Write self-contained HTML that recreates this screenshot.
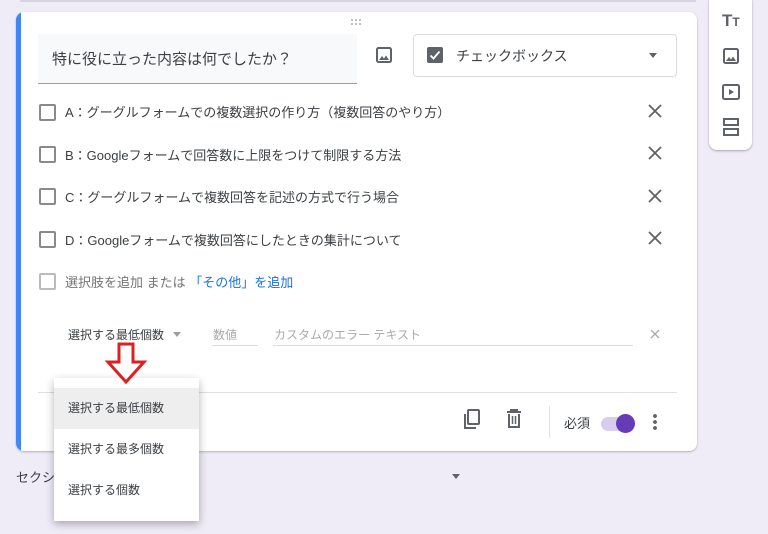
<!DOCTYPE html>
<html><head><meta charset="utf-8"><style>
*{margin:0;padding:0;box-sizing:border-box}
body{width:768px;height:534px;background:#efebf7;position:relative;overflow:hidden;font-family:"Liberation Sans","Noto Sans CJK JP",sans-serif;color:#202124}
.a{position:absolute}
.card{left:16px;top:12px;width:681px;height:439px;background:#fff;border-radius:8px;box-shadow:0 1px 2px rgba(0,0,0,.25);overflow:hidden}
.bar{left:0;top:0;width:5px;height:439px;background:#4285f4}
.cb{width:17px;height:17px;border:2px solid #8a8a8a;border-radius:2px}
.opt{font-size:13px;color:#3c4043}
.menu div{height:41px;line-height:41px;padding-left:14px;font-size:12px;color:#3c4043}
</style></head><body>
<div class="a" style="left:20px;top:0;width:676px;height:2px;background:#d8d4e0"></div>
<div class="a card">
 <div class="a bar"></div>
 <svg class="a" style="left:334px;top:6px" width="14" height="9"><g fill="#aaa"><circle cx="2" cy="2" r="1"/><circle cx="6" cy="2" r="1"/><circle cx="10" cy="2" r="1"/><circle cx="2" cy="6" r="1"/><circle cx="6" cy="6" r="1"/><circle cx="10" cy="6" r="1"/></g></svg>
 <div class="a" style="left:22px;top:22px;width:319px;height:50px;background:#f8f9fa;border-bottom:1px solid #9e9e9e"></div>
 <div class="a" style="left:36px;top:36px;font-size:15px;color:#3c4043">特に役に立った内容は何でしたか？</div>
 <svg class="a" style="left:359px;top:34px" width="18" height="18" viewBox="0 0 18 18"><rect x="2" y="2" width="14" height="14" rx="1.5" fill="none" stroke="#5f6368" stroke-width="2"/><path d="M4 14l3-4 2 2.5 2-3 3 4.5z" fill="#5f6368"/></svg>
 <div class="a" style="left:397px;top:22px;width:264px;height:43px;border:1px solid #dadce0;border-radius:4px"></div>
 <svg class="a" style="left:411px;top:35px" width="16" height="16" viewBox="0 0 16 16"><rect width="16" height="16" rx="2" fill="#5f6368"/><path d="M3.5 8.5l3 3 6-7" fill="none" stroke="#fff" stroke-width="1.8"/></svg>
 <div class="a" style="left:440px;top:34px;font-size:14px;color:#3c4043">チェックボックス</div>
 <div class="a" style="left:633px;top:41px;border:4px solid transparent;border-top:5px solid #5f6368"></div>
 <div class="a cb" style="left:23px;top:92px"></div><div class="a opt" style="left:49px;top:90px">A：グーグルフォームでの複数選択の作り方（複数回答のやり方）</div>
 <div class="a cb" style="left:23px;top:134px"></div><div class="a opt" style="left:49px;top:133px">B：Googleフォームで回答数に上限をつけて制限する方法</div>
 <div class="a cb" style="left:23px;top:176px"></div><div class="a opt" style="left:49px;top:175px">C：グーグルフォームで複数回答を記述の方式で行う場合</div>
 <div class="a cb" style="left:23px;top:219px"></div><div class="a opt" style="left:49px;top:218px">D：Googleフォームで複数回答にしたときの集計について</div>
 <svg class="a" style="left:632px;top:92px" width="14" height="150" viewBox="0 0 14 150"><g stroke="#5f6368" stroke-width="1.8"><path d="M1 1l12 12M13 1L1 13"/><path d="M1 43l12 12M13 43L1 55"/><path d="M1 86l12 12M13 86L1 98"/><path d="M1 128l12 12M13 128L1 140"/></g></svg>
 <div class="a cb" style="left:23px;top:261px;border-color:#bbb"></div><div class="a opt" style="left:49px;top:260px;color:#757575">選択肢を追加 または <span style="color:#1a73e8">「その他」を追加</span></div>
 <div class="a" style="left:52px;top:314px;font-size:12px;color:#3c4043">選択する最低個数</div>
 <div class="a" style="left:157px;top:320px;border:4px solid transparent;border-top:5px solid #9e9e9e"></div>
 <div class="a" style="left:197px;top:314px;font-size:12px;color:#aaa">数値</div>
 <div class="a" style="left:196px;top:333px;width:46px;height:1px;background:#ddd"></div>
 <div class="a" style="left:258px;top:314px;font-size:12px;color:#aaa">カスタムのエラー テキスト</div>
 <div class="a" style="left:257px;top:333px;width:360px;height:1px;background:#ddd"></div>
 <svg class="a" style="left:634px;top:317px" width="10" height="10"><path d="M1 1l8 8M9 1L1 9" stroke="#aaa" stroke-width="1.3"/></svg>
 <div class="a" style="left:22px;top:380px;width:639px;height:1px;background:#e0e0e0"></div>
 <svg class="a" style="left:446px;top:396px" width="20" height="22" viewBox="0 0 20 22"><rect x="6" y="2" width="11" height="14" rx="1" fill="none" stroke="#5f6368" stroke-width="2"/><path d="M3 6v14h11" fill="none" stroke="#5f6368" stroke-width="2"/></svg>
 <svg class="a" style="left:490px;top:397px" width="16" height="20" viewBox="0 0 16 20"><path d="M1 3h14M5 3V1h6v2M3 5v13h10V5" fill="none" stroke="#5f6368" stroke-width="2"/><path d="M6.5 7v8M9.5 7v8" stroke="#5f6368" stroke-width="1.5"/></svg>
 <div class="a" style="left:533px;top:394px;width:1px;height:32px;background:#e0e0e0"></div>
 <div class="a" style="left:548px;top:401px;font-size:13px;color:#3c4043">必須</div>
 <div class="a" style="left:585px;top:405px;width:30px;height:14px;border-radius:7px;background:#d8cdef"></div>
 <div class="a" style="left:600px;top:402px;width:19px;height:19px;border-radius:50%;background:#673ab7"></div>
 <div class="a" style="left:637px;top:401px;width:4px;height:18px;background:radial-gradient(circle,#5f6368 1.8px,transparent 2px) 0 0/4px 6px"></div>
</div>
<div class="a" style="left:16px;top:467px;font-size:13px;color:#3c4043">セクション 最後に送信</div>
<div class="a" style="left:452px;top:474px;border:4px solid transparent;border-top:5px solid #5f6368"></div>
<div class="a" style="left:709px;top:-6px;width:43px;height:156px;background:#fff;border-radius:8px;box-shadow:0 1px 2px rgba(0,0,0,.3)"></div>
<div class="a" style="left:722px;top:11px;font-size:17px;font-weight:bold;color:#5f6368">T<span style="font-size:12px">T</span></div>
<svg class="a" style="left:722px;top:47px" width="18" height="18" viewBox="0 0 18 18"><rect x="2" y="2" width="14" height="14" rx="1.5" fill="none" stroke="#5f6368" stroke-width="2"/><path d="M4 14l3-4 2 2.5 2-3 3 4.5z" fill="#5f6368"/></svg>
<svg class="a" style="left:721px;top:83px" width="20" height="18" viewBox="0 0 20 18"><rect x="2" y="2" width="16" height="14" rx="1.5" fill="none" stroke="#5f6368" stroke-width="2"/><path d="M8 6v6l5-3z" fill="#5f6368"/></svg>
<svg class="a" style="left:722px;top:118px" width="18" height="18" viewBox="0 0 18 18"><rect x="2" y="1" width="14" height="6" fill="none" stroke="#5f6368" stroke-width="2"/><rect x="2" y="11" width="14" height="6" fill="none" stroke="#5f6368" stroke-width="2"/></svg>
<div class="a menu" style="left:54px;top:378px;width:145px;height:143px;background:#fff;box-shadow:0 3px 8px rgba(0,0,0,.3);padding-top:10px">
 <div style="background:#eee">選択する最低個数</div><div>選択する最多個数</div><div>選択する個数</div>
</div>
<svg class="a" style="left:104px;top:342px" width="44" height="42" viewBox="0 0 44 42"><path d="M15 2h14v18h11L22 40 4 20h11z" fill="#fff" stroke="#e02020" stroke-width="3"/></svg>
</body></html>
